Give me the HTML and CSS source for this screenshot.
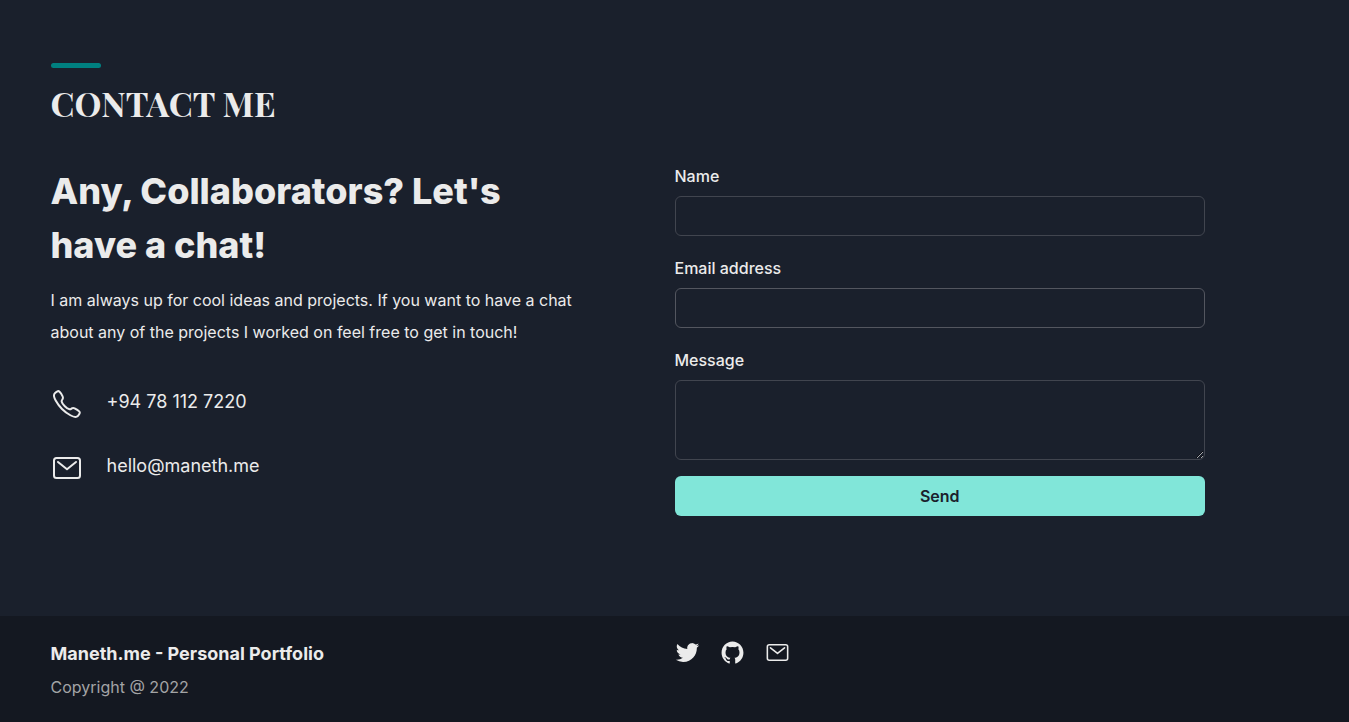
FILE: index.html
```html
<!DOCTYPE html>
<html lang="en">
<head>
<meta charset="utf-8">
<meta name="viewport" content="width=device-width, initial-scale=1">
<title>Maneth.me</title>
<link rel="stylesheet" href="styles.css">
</head>
<body>
<main class="contact container">
  <header class="section-head">
    <div class="accent"></div>
    <h1 class="section-title">CONTACT ME</h1>
  </header>
  <div class="columns">
    <section class="intro">
      <h2 class="headline">Any, Collaborators? Let's have a chat!</h2>
      <p class="lead">I am always up for cool ideas and projects. If you want to have a chat about any of the projects I worked on feel free to get in touch!</p>
      <ul class="details">
        <li class="detail">
          <svg class="detail-icon" viewBox="0 0 512 512" aria-hidden="true"><path d="M451 374c-15.88-16-54.34-39.35-73-48.76-24.3-12.24-26.3-13.24-45.4.95-12.74 9.47-21.21 17.93-36.12 14.75s-47.31-21.11-75.68-49.39-47.34-61.62-50.53-76.48 5.41-23.23 14.79-36c13.22-18 12.22-21 .92-45.3-8.81-18.9-32.84-57-48.9-72.8C119.9 44 119.9 47 108.83 51.6A160.15 160.15 0 0083 65.37C67 76 58.12 84.83 51.91 98.1s-9 44.38 23.07 102.64 54.57 88.05 101.14 134.49S258.5 406.64 310.36 436c64.16 35.93 88.77 28.92 102.08 22.75s22.18-15 32.83-31a159.09 159.09 0 0013.8-25.8C463.6 391 466.6 391 451 374z"/></svg>
          <span>+94 78 112 7220</span>
        </li>
        <li class="detail">
          <svg class="detail-icon" viewBox="0 0 512 512" aria-hidden="true"><rect x="48" y="96" width="416" height="320" rx="40"/><path d="M112 160l144 116 144-116"/></svg>
          <span>hello@maneth.me</span>
        </li>
      </ul>
    </section>
    <form class="form">
      <div class="field">
        <label class="label" for="name">Name</label>
        <input class="control" id="name" type="text">
      </div>
      <div class="field">
        <label class="label" for="email">Email address</label>
        <input class="control control-strong" id="email" type="email">
      </div>
      <div class="field">
        <label class="label" for="message">Message</label>
        <textarea class="control message" id="message"></textarea>
      </div>
      <button class="send" type="button">Send</button>
    </form>
  </div>
</main>
<footer class="footer">
  <div class="container columns">
    <div>
      <p class="brand">Maneth.me - Personal Portfolio</p>
      <p class="copyright">Copyright @ 2022</p>
    </div>
    <nav class="social" aria-label="Social links">
      <a class="social-link" href="#" aria-label="Twitter"><svg class="social-icon" viewBox="0 0 512 512"><path class="solid" d="M496 109.5a201.8 201.8 0 01-56.55 15.3 97.51 97.51 0 0043.33-53.6 197.74 197.74 0 01-62.56 23.5A99.14 99.14 0 00348.31 64c-54.42 0-98.46 43.4-98.46 96.9a93.21 93.21 0 002.54 22.1 280.7 280.7 0 01-203-101.3A95.69 95.69 0 0036 130.4c0 33.6 17.53 63.3 44 80.7A97.5 97.5 0 0135.22 199v1.2c0 47 34 86.1 79 95a100.76 100.76 0 01-25.94 3.4 94.38 94.38 0 01-18.51-1.8c12.51 38.5 48.92 66.5 92.05 67.3A199.59 199.59 0 0139.5 405.6a203 203 0 01-23.5-1.4A278.68 278.68 0 00166.74 448c181.36 0 280.44-147.7 280.44-275.8 0-4.2-.11-8.4-.31-12.5A198.48 198.48 0 00496 109.5z"/></svg></a>
      <a class="social-link" href="#" aria-label="GitHub"><svg class="social-icon" viewBox="0 0 512 512"><path class="solid" d="M256 32C132.3 32 32 134.9 32 261.7c0 101.5 64.2 187.5 153.2 217.9a17.56 17.56 0 003.8.4c8.3 0 11.5-6.1 11.5-11.4 0-5.5-.2-19.9-.3-39.1a102.4 102.4 0 01-22.6 2.7c-43.1 0-52.9-33.5-52.9-33.5-10.2-26.5-24.9-33.6-24.9-33.6-19.5-13.7-.1-14.1 1.4-14.1h.1c22.5 2 34.3 23.8 34.3 23.8 11.2 19.6 26.2 25.1 39.6 25.1a63 63 0 0025.6-6c2-14.8 7.8-24.9 14.2-30.7-49.7-5.8-102-25.5-102-113.5 0-25.1 8.7-45.6 23-61.6-2.3-5.8-10-29.2 2.2-60.8a18.64 18.64 0 015-.5c8.1 0 26.4 3.1 56.6 24.1a208.21 208.21 0 01112.2 0c30.2-21 48.5-24.1 56.6-24.1a18.64 18.64 0 015 .5c12.2 31.6 4.5 55 2.2 60.8 14.3 16.1 23 36.6 23 61.6 0 88.2-52.4 107.6-102.3 113.3 8 7.1 15.2 21.1 15.2 42.5 0 30.7-.3 55.5-.3 63 0 5.4 3.1 11.5 11.4 11.5a19.35 19.35 0 004-.4C415.9 449.2 480 363.1 480 261.7 480 134.9 379.7 32 256 32z"/></svg></a>
      <a class="social-link" href="#" aria-label="Email"><svg class="social-icon" viewBox="0 0 512 512"><rect x="48" y="96" width="416" height="320" rx="40"/><path d="M112 160l144 116 144-116"/></svg></a>
    </nav>
  </div>
</footer>
</body>
</html>
```
FILE: styles.css
```css
* { box-sizing: border-box; margin: 0; padding: 0; }
body {
  min-height: 100vh;
  display: flex;
  flex-direction: column;
  background: #1a202c;
  color: #ebebeb;
  font: 16px/24px Inter, "Liberation Sans", sans-serif;
}
.container { width: calc(100% - 48px); max-width: 1248px; margin: 0 auto; }
.columns { display: grid; grid-template-columns: 1fr 1fr; }
.contact { padding: 63px 0 100px; }
.accent { width: 50px; height: 5px; border-radius: 3px; background: #008080; }
.section-title {
  margin: 11px 0 37px;
  font: bold 34px/48px "Playfair Display", "Liberation Serif", serif;
}
.intro, .form { width: 85%; }
.headline { font-size: 36px; line-height: 54px; font-weight: 850; }
.lead { margin-top: 12px; line-height: 32px; }
.details { margin-top: 40px; display: grid; gap: 32px; list-style: none; }
.detail { display: flex; gap: 24px; font-size: 18px; line-height: 27px; }
.detail-icon { width: 32px; height: 32px; }
svg { display: block; fill: none; stroke: #ebebeb; stroke-width: 32; stroke-linecap: round; stroke-linejoin: round; }
.solid { fill: #ebebeb; stroke: none; }
.field { margin-bottom: 20px; }
.field:last-of-type { margin-bottom: 16px; }
.label { display: block; margin-bottom: 8px; font-weight: 500; }
.control {
  display: block;
  width: 100%;
  height: 40px;
  padding: 0 16px;
  border: 1px solid #41454f;
  border-radius: 6px;
  background: transparent;
  color: inherit;
  font: inherit;
}
.control-strong { border-color: #53565f; }
.message { height: 80px; padding: 8px 16px; resize: vertical; }
.send {
  display: block;
  width: 100%;
  height: 40px;
  border: 0;
  border-radius: 6px;
  background: #81e6d9;
  color: #1a202c;
  font: 600 16px/24px Inter, "Liberation Sans", sans-serif;
}
.footer { flex: 1; padding: 24px 0 20px; background: #141821; }
.brand { font-size: 18px; line-height: 27px; font-weight: 700; }
.copyright { margin-top: 8px; color: #a3a4a6; }
.social { display: flex; gap: 20px; }
.social-icon { width: 25px; height: 25px; }
```
